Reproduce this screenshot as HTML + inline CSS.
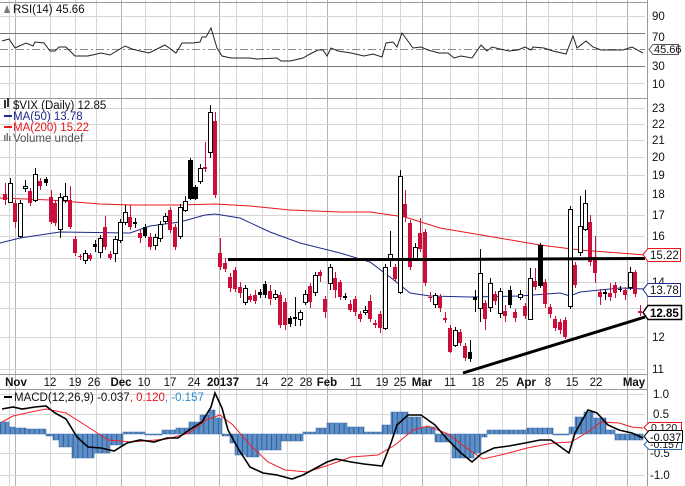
<!DOCTYPE html>
<html><head><meta charset="utf-8"><style>
html,body{margin:0;padding:0;background:#fff;}
svg{display:block;font-family:"Liberation Sans",Arial,sans-serif;}
</style></head><body>
<svg width="685" height="486" viewBox="0 0 685 486" xmlns="http://www.w3.org/2000/svg">
<defs>
<pattern id="hp" x="0" y="0" width="4.84" height="10" patternUnits="userSpaceOnUse">
<rect width="4.84" height="10" fill="#5e8fc8"/><rect width="1" height="10" fill="#2f5f94"/>
</pattern>
</defs>
<rect width="685" height="486" fill="#fff"/>
<g stroke="#d6d6d6" stroke-width="1" shape-rendering="crispEdges">
<path d="M9.5 0V486M50.5 0V486M75.5 0V486M96.5 0V486M145.5 0V486M170.5 0V486M194.5 0V486M236.5 0V486M262.5 0V486M287.5 0V486M306.5 0V486M356.5 0V486M382.5 0V486M400.5 0V486M450.5 0V486M478.5 0V486M502.5 0V486M548.5 0V486M572.5 0V486M596.5 0V486"/>
</g>
<g stroke="#b4b4b4" stroke-width="1" shape-rendering="crispEdges">
<path d="M15.5 0V486M121.5 0V486M219.5 0V486M327.5 0V486M422.5 0V486M526.5 0V486M627.5 0V486"/>
</g>
<g stroke="#d6d6d6" shape-rendering="crispEdges">
<path d="M0 16.5H645M0 83.5H645M0 108.5H645M0 124.5H645M0 140.5H645M0 157.5H645M0 175.5H645M0 194.5H645M0 215.5H645M0 236.5H645M0 258.5H645M0 282.5H645M0 308.5H645M0 337.5H645M0 369.5H645M0 394.5H645M0 414.5H645M0 453.5H645M0 475.5H645"/>
</g>
<g stroke="#9a9a9a" shape-rendering="crispEdges">
<path d="M0 2.5H648M0 98.5H648M0 374.5H648M0 389.5H648M647.5 0V486"/>
</g>
<g stroke="#777" shape-rendering="crispEdges"><path d="M0 33.5H645M0 66.5H645"/></g>
<path d="M0 49.5H645" stroke="#888" stroke-dasharray="8,3,2,3" shape-rendering="crispEdges"/>
<polyline fill="none" stroke="#222" stroke-width="1" points="2,41 9,39 15,48 26,43 33,46 35,42 44,43 50,51 55,51 59,47 66,47 75,56 88,56 101,53 110,55 125,46 132,49 140,51 149,53 165,45 176,53 182,43 193,43 200,42 202,37 206,37 211,28 217,48 222,56 231,58 250,58 257,59 277,58 281,61 290,61 303,58 310,54 318,50 323,50 327,56 331,48 338,51 351,53 364,56 373,54 382,57 386,43 393,42 397,47 402,33 413,48 421,47 428,50 439,53 448,53 454,58 461,56 472,58 481,45 487,51 492,47 500,49 509,51 518,50 525,47 531,50 533,47 544,48 553,51 566,54 573,36 577,48 586,41 593,47 601,50 623,50 632,47 643,53"/>
<g font-size="11.5" fill="#111">
<path d="M4 13 L7 5 L10 13Z" fill="#777"/>
<text x="13" y="13">RSI(14) 45.66</text>
<text x="652" y="20">90</text><text x="652" y="41">70</text><text x="652" y="70">30</text><text x="652" y="88">10</text>
</g>
<path d="M649 49.5 L653 44.5 H678.5 V54.5 H653Z" fill="#fff" stroke="#555"/>
<text x="654" y="53" font-size="11" fill="#111">45.66</text>

<polyline fill="none" stroke="#e8161b" stroke-width="1" points="0,198 50,200 100,204 130,205 180,205 215,204 250,206 290,210 340,212 370,212 405,217 440,228 493,237 540,245 580,250 645,255"/>
<polyline fill="none" stroke="#1f2a8c" stroke-width="1" points="0,243 20,238 40,235 60,232 130,233 150,226 180,222 205,215 215,214 240,218 270,232 300,243 340,253 370,262 390,277 410,293 430,296 470,297 520,296 560,293 570,296 580,292 600,290 620,288 645,289"/>

<path fill="#cc0f3a" shape-rendering="crispEdges" d="M3 194h4v6h-4zM13 203h4v19h-4zM28 191h4v12h-4zM38 181h4v5h-4zM49 197h4v25h-4zM53 203h4v20h-4zM68 200h4v27h-4zM73 239h4v14h-4zM78 256h4v1h-4zM88 255h4v4h-4zM103 227h4v20h-4zM108 254h4v4h-4zM128 217h4v10h-4zM138 233h4v5h-4zM148 237h4v10h-4zM168 210h4v20h-4zM173 227h4v20h-4zM203 167h4v2h-4zM213 121h4v74h-4zM218 253h4v14h-4zM223 263h4v6h-4zM228 277h4v11h-4zM233 270h4v19h-4zM238 287h4v6h-4zM248 296h4v4h-4zM253 295h4v6h-4zM268 291h4v8h-4zM278 295h4v30h-4zM283 302h4v23h-4zM308 286h4v16h-4zM318 272h4v4h-4zM323 299h4v13h-4zM333 278h4v12h-4zM338 282h4v15h-4zM348 304h4v6h-4zM353 299h4v13h-4zM358 314h4v5h-4zM368 301h4v18h-4zM373 323h4v2h-4zM378 314h4v14h-4zM393 267h4v12h-4zM403 204h4v13h-4zM408 223h4v44h-4zM418 233h4v16h-4zM423 232h4v51h-4zM428 297h4v1h-4zM438 297h4v11h-4zM443 318h4v2h-4zM448 328h4v24h-4zM458 332h4v11h-4zM463 346h4v12h-4zM483 303h4v16h-4zM493 294h4v7h-4zM503 311h4v5h-4zM513 312h4v6h-4zM523 306h4v10h-4zM533 281h4v6h-4zM543 282h4v22h-4zM548 307h4v7h-4zM553 319h4v9h-4zM558 322h4v8h-4zM563 320h4v17h-4zM573 265h4v20h-4zM588 222h4v40h-4zM593 257h4v16h-4zM598 292h4v5h-4zM608 293h4v4h-4zM613 285h4v8h-4zM623 290h4v5h-4zM633 272h4v22h-4zM638 311h4v2h-4z"/>
<path fill="none" stroke="#cc0f3a" stroke-width="1" shape-rendering="crispEdges" d="M5.5 183V205M15.5 200V228M30.5 188V206M40.5 178V190M51.5 190V224M55.5 200V226M70.5 186V229M75.5 236V256M80.5 254V260M90.5 253V261M105.5 216V250M110.5 251V260M130.5 205V230M140.5 230V243M150.5 233V250M170.5 207V233M175.5 224V250M205.5 142V172M215.5 112V198M220.5 238V270M225.5 258V272M230.5 273V292M235.5 267V292M240.5 282V298M250.5 294V302M255.5 290V304M270.5 285V305M280.5 292V328M285.5 298V330M310.5 283V308M320.5 270V282M325.5 296V318M335.5 272V298M340.5 280V300M350.5 300V312M355.5 296V316M360.5 311V322M370.5 295V322M375.5 320V328M380.5 311V333M395.5 264V282M405.5 190V222M410.5 220V270M420.5 218V252M425.5 229V286M430.5 292V302M440.5 294V312M445.5 312V323M450.5 325V353M460.5 329V346M465.5 343V361M485.5 300V330M495.5 291V305M505.5 305V322M515.5 309V322M525.5 303V319M535.5 268V290M545.5 279V308M550.5 304V318M555.5 316V331M560.5 319V334M565.5 317V339M575.5 262V288M590.5 215V266M595.5 236V283M600.5 289V305M610.5 283V301M615.5 282V298M625.5 287V300M635.5 270V297M640.5 305V316"/>
<path fill="none" stroke="#000" stroke-width="1" shape-rendering="crispEdges" d="M10.5 178V203M20.5 200V238M25.5 180V192M35.5 168V202M60.5 193V238M65.5 183V203M85.5 250V264M100.5 235V258M115.5 236V262M120.5 219V243M125.5 205V225M155.5 234V250M160.5 221V242M165.5 213V224M180.5 204V239M185.5 196V212M200.5 164V184M210.5 105V158M245.5 285V305M275.5 290V300M300.5 310V326M305.5 290V305M315.5 272V296M330.5 264V290M365.5 306V315M385.5 264V330M390.5 231V267M400.5 170V294M415.5 243V260M435.5 293V308M455.5 327V347M480.5 249V322M490.5 278V312M500.5 288V318M520.5 290V300M530.5 268V320M570.5 206V309M580.5 196V256M585.5 190V231M630.5 267V290M46.5 177V186M95.5 240V252M135.5 218V228M145.5 224V238M190.5 158V200M195.5 185V200M260.5 289V298M265.5 281V298M290.5 316V327M295.5 297V326M345.5 293V300M470.5 340V362M475.5 290V312M510.5 286V308M540.5 243V288M605.5 290V300M620.5 286V292"/>
<path fill="#000" shape-rendering="crispEdges" d="M44 179h4v4h-4zM93 244h4v3h-4zM133 222h4v2h-4zM143 227h4v9h-4zM188 160h5v39h-5zM193 187h5v12h-5zM258 292h4v3h-4zM263 284h4v11h-4zM288 318h4v6h-4zM293 317h4v2h-4zM343 296h4v2h-4zM468 352h4v7h-4zM473 297h4v3h-4zM508 290h4v15h-4zM538 245h5v41h-5zM603 292h4v2h-4zM618 289h4v1h-4z"/>
<path fill="#fff" stroke="#000" stroke-width="1" shape-rendering="crispEdges" d="M8.5 183.5h4v19h-4zM18.5 203.5h4v33h-4zM23.5 186.5h4v2h-4zM33.5 174.5h4v26h-4zM58.5 197.5h4v32h-4zM63.5 196.5h4v4h-4zM83.5 253.5h4v7h-4zM98.5 238.5h4v14h-4zM113.5 239.5h4v14h-4zM118.5 222.5h4v18h-4zM123.5 212.5h4v10h-4zM153.5 237.5h4v8h-4zM158.5 224.5h4v14h-4zM163.5 216.5h4v5h-4zM178.5 207.5h4v29h-4zM183.5 201.5h4v9h-4zM198.5 168.5h4v13h-4zM208.5 112.5h4v40h-4zM243.5 288.5h4v14h-4zM273.5 294.5h4v3h-4zM298.5 312.5h4v7h-4zM303.5 294.5h4v8h-4zM313.5 275.5h4v17h-4zM328.5 267.5h4v16h-4zM363.5 310.5h4v2h-4zM383.5 267.5h4v61h-4zM388.5 254.5h4v4h-4zM398.5 176.5h4v116h-4zM413.5 247.5h4v11h-4zM433.5 295.5h4v9h-4zM453.5 330.5h4v15h-4zM478.5 273.5h4v35h-4zM488.5 283.5h4v24h-4zM498.5 291.5h4v22h-4zM518.5 294.5h4v3h-4zM528.5 278.5h4v41h-4zM568.5 209.5h4v97h-4zM578.5 226.5h4v26h-4zM583.5 203.5h4v26h-4zM628.5 272.5h4v15h-4z"/>

<path d="M228 259.5H440L645 258.5" stroke="#000" stroke-width="3" fill="none"/>
<path d="M463 373L645 317" stroke="#000" stroke-width="3" fill="none"/>

<g font-size="11.5">
<rect x="4" y="100" width="2" height="8" fill="#333"/><rect x="7" y="98" width="2" height="9" fill="#333"/>
<text x="13" y="109" fill="#111">$VIX (Daily) 12.85</text>
<rect x="4" y="115" width="8" height="2" fill="#1f2a8c"/><text x="13" y="120" fill="#1f2a8c">MA(50) 13.78</text>
<rect x="4" y="126" width="8" height="2" fill="#e8161b"/><text x="13" y="131" fill="#e8161b">MA(200) 15.22</text>
<path d="M4 141V135h1.5v6h1V133h1.5v8h1V136h1.5v5z" fill="#777"/><text x="13" y="142" fill="#555">Volume undef</text>
</g>
<g font-size="11.5" fill="#111">
<text x="652" y="112">23</text><text x="652" y="128">22</text><text x="652" y="144">21</text><text x="652" y="161">20</text><text x="652" y="179">19</text><text x="652" y="198">18</text><text x="652" y="219">17</text><text x="652" y="240">16</text><text x="652" y="262">15</text><text x="652" y="286">14</text><text x="652" y="341">12</text><text x="652" y="373">11</text>
</g>
<path d="M643 254.5 L648 248.5 H680.5 V261.5 H648Z" fill="#fff" stroke="#e8161b"/>
<text x="650" y="259" font-size="11.5" fill="#111">15.22</text>
<path d="M643 289.5 L648 283.5 H680.5 V296.5 H648Z" fill="#fff" stroke="#1f2a8c"/>
<text x="650" y="294" font-size="11.5" fill="#111">13.78</text>
<path d="M643 312.5 L648 305.5 H681.5 V319.5 H648Z" fill="#fff" stroke="#000" stroke-width="1.5"/>
<text x="650" y="317" font-size="11.5" font-weight="bold" fill="#000">12.85</text>

<g font-size="11.5" fill="#111" text-anchor="middle">
<text x="16" y="386" font-weight="bold">Nov</text><text x="50" y="386">12</text><text x="75" y="386">19</text><text x="94" y="386">26</text>
<text x="121" y="386" font-weight="bold">Dec</text><text x="144" y="386">10</text><text x="170" y="386">17</text><text x="194" y="386">24</text>
<text x="223" y="386" font-weight="bold">20137</text><text x="262" y="386">14</text><text x="287" y="386">22</text><text x="306" y="386">28</text>
<text x="327" y="386" font-weight="bold">Feb</text><text x="356" y="386">11</text><text x="382" y="386">19</text><text x="400" y="386">25</text>
<text x="422" y="386" font-weight="bold">Mar</text><text x="450" y="386">11</text><text x="478" y="386">18</text><text x="502" y="386">25</text>
<text x="526" y="386" font-weight="bold">Apr</text><text x="548" y="386">8</text><text x="572" y="386">15</text><text x="596" y="386">22</text>
<text x="634" y="386" font-weight="bold">May</text>
</g>

<path fill="url(#hp)" stroke="#3d6ea8" stroke-width="0.6" d="M0 434V422H9V427H15V428H26V429H46V436H53V440H59V447H72V458H94V453H110V445H123V432H145V435H162V430H176V428H189V422H200V415H209V410H215V418H222V436H230V443H235V455H246V457H259V450H281V441H303V432H316V428H327V423H347V427H364V432H382V425H391V412H408V417H421V427H435V442H452V458H474V453H481V437H487V430H527V428H553V435H569V427H575V417H584V412H593V418H606V430H615V440H643V434Z"/>
<polyline fill="none" stroke="#f0202a" stroke-width="1" points="2,422 13,416 31,412 46,409 66,413 88,427 108,440 132,442 167,439 189,433 206,420 220,415 233,425 250,445 268,462 285,470 307,472 329,465 351,457 378,455 395,445 413,430 428,426 448,434 465,447 483,459 505,454 527,448 553,443 571,442 588,432 601,422 619,423 632,427 643,428"/>
<polyline fill="none" stroke="#000" stroke-width="1.6" points="2,409 13,407 22,409 35,407 46,406 55,413 66,419 77,437 88,447 101,448 114,451 127,443 140,440 154,442 167,438 178,438 189,430 202,422 211,407 215,393 222,408 228,430 239,450 250,467 263,473 277,475 292,479 303,475 316,468 327,462 336,459 351,462 364,464 382,466 391,443 397,425 408,415 421,415 435,425 448,440 461,453 472,462 481,454 494,448 509,446 525,443 540,440 551,440 569,453 575,433 588,410 597,413 608,425 619,430 632,433 643,438"/>
<g font-size="11.5">
<rect x="4" y="396" width="8" height="2" fill="#000"/>
<text x="14" y="401" fill="#111">MACD(12,26,9) -0.037<tspan fill="#e8161b">, 0.120</tspan><tspan fill="#2a8ccc">, -0.157</tspan></text>
</g>
<g font-size="11.5" fill="#111">
<text x="653" y="398">1.0</text><text x="653" y="418">0.5</text><text x="650" y="457">-0.5</text><text x="650" y="479">-1.0</text>
</g>
<path d="M644 444.5 L649 439.5 H681.5 V449.5 H649Z" fill="#fff" stroke="#2a6ab0"/>
<text x="650" y="448" font-size="10.5" fill="#111">-0.157</text>
<path d="M644 427.5 L649 422.5 H681.5 V432.5 H649Z" fill="#fff" stroke="#e8161b"/>
<text x="651" y="431" font-size="10.5" fill="#111">0.120</text>
<path d="M644 436.5 L649 430.5 H682.5 V442.5 H649Z" fill="#fff" stroke="#000"/>
<text x="650" y="441" font-size="11" fill="#000">-0.037</text>
</svg>
</body></html>
